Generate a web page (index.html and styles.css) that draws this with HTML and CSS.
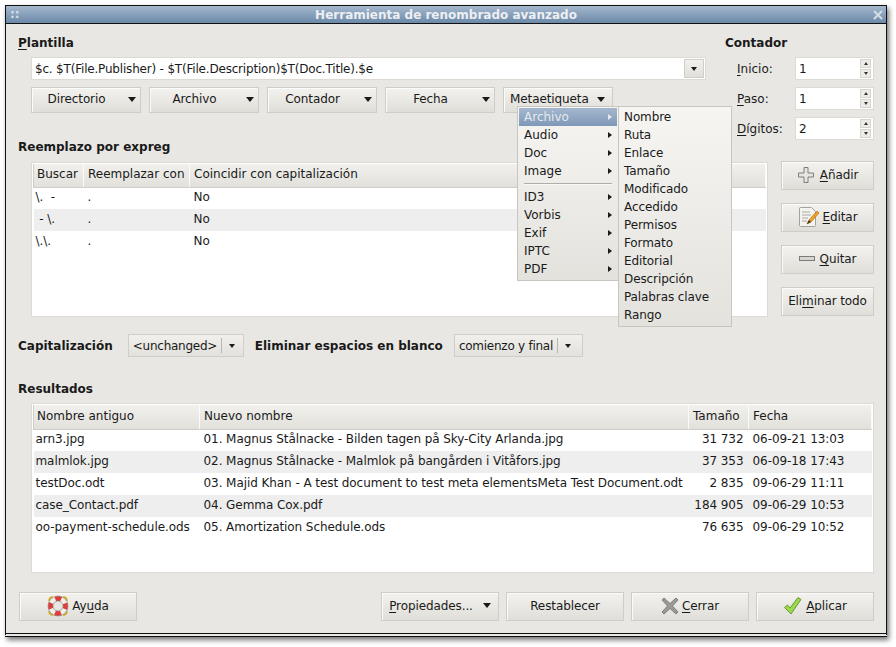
FILE: index.html
```html
<!DOCTYPE html>
<html lang="es">
<head>
    <meta charset="UTF-8">
    <title>Herramienta de renombrado avanzado</title>
    <link rel="stylesheet" href="styles.css">
</head>
<body>
    <div class="window">
        <div class="titlebar">
            <span class="grip">::</span>
            <span class="title">Herramienta de renombrado avanzado</span>
            <svg class="close" width="10" height="10" viewBox="0 0 10 10"><path d="M1 1L9 9M9 1L1 9" stroke="#d5dde6" stroke-width="2"/></svg>
        </div>
        <div class="content">
            <div class="top">
                <div class="template">
                    <div class="heading"><u>P</u>lantilla</div>
                    <div class="indent">
                        <div class="entry-combo">
                            <div class="entry-text">$c. $T(File.Publisher) - $T(File.Description)$T(Doc.Title).$e</div>
                            <div class="entry-btn"><i class="arrow small"></i></div>
                        </div>
                        <div class="token-row">
                            <div class="btn token"><span>Directorio</span><i class="arrow"></i></div>
                            <div class="btn token"><span>Archivo</span><i class="arrow"></i></div>
                            <div class="btn token"><span>Contador</span><i class="arrow"></i></div>
                            <div class="btn token"><span>Fecha</span><i class="arrow"></i></div>
                            <div class="btn token meta"><span>Metaetiqueta</span><i class="arrow"></i></div>
                        </div>
                    </div>
                </div>
                <div class="counter">
                    <div class="heading">Contador</div>
                    <div class="spin-row"><label><u>I</u>nicio:</label><div class="spin"><span>1</span><div class="spin-btns"><i class="up"></i><i class="down"></i></div></div></div>
                    <div class="spin-row"><label><u>P</u>aso:</label><div class="spin"><span>1</span><div class="spin-btns"><i class="up"></i><i class="down"></i></div></div></div>
                    <div class="spin-row"><label><u>D</u>ígitos:</label><div class="spin"><span>2</span><div class="spin-btns"><i class="up"></i><i class="down"></i></div></div></div>
                </div>
            </div>

            <div class="heading">Reemplazo por expreg</div>
            <div class="regex">
                <div class="list regex-list">
                    <table>
                        <colgroup><col class="c-find"><col class="c-repl"><col></colgroup>
                        <thead><tr><th>Buscar</th><th>Reemplazar con</th><th>Coincidir con capitalización</th></tr></thead>
                        <tbody>
                            <tr><td>\.  -</td><td>.</td><td>No</td></tr>
                            <tr><td> - \.</td><td>.</td><td>No</td></tr>
                            <tr><td>\.\.</td><td>.</td><td>No</td></tr>
                        </tbody>
                    </table>
                </div>
                <div class="side-buttons">
                    <div class="btn wide-gap">
                        <svg width="18" height="18" viewBox="0 0 18 18"><path d="M7 1.500h4v5.500h5.500v4H11v5.500H7V11H1.500V7H7z" fill="#e6e5e1" stroke="#7c7c78"/></svg>
                        <span><u>A</u>ñadir</span>
                    </div>
                    <div class="btn">
                        <svg width="22" height="22" viewBox="0 0 22 22">
                            <path d="M2.500 1.500h11l4 4v14a1 1 0 0 1-1 1h-14a1 1 0 0 1-1-1v-17a1 1 0 0 1 1-1z" fill="#f4f3ee" stroke="#a4a29a"/>
                            <path d="M4 6h8M4 9h9M4 12h6M4 15h5" stroke="#a8a8a4"/>
                            <path d="M9 18l2-4 8-9 2 2-8 9z" fill="#f0a020" stroke="#a8660c" stroke-width=".6"/>
                            <path d="M9 18l2-4 2 2z" fill="#3a3026"/>
                        </svg>
                        <span><u>E</u>ditar</span>
                    </div>
                    <div class="btn wide-gap">
                        <svg width="16" height="5" viewBox="0 0 16 5"><rect x=".5" y=".5" width="15" height="4" fill="#d6d5d0" stroke="#7c7c78"/></svg>
                        <span><u>Q</u>uitar</span>
                    </div>
                    <div class="btn"><span>Eli<u>m</u>inar todo</span></div>
                </div>
            </div>

            <div class="options">
                <span class="label">Capitalización</span>
                <div class="combo caps"><span>&lt;unchanged&gt;</span><b></b><i class="arrow small"></i></div>
                <span class="label">Eliminar espacios en blanco</span>
                <div class="combo trim"><span>comienzo y final</span><b></b><i class="arrow small"></i></div>
            </div>

            <div class="heading results-heading">Resultados</div>
            <div class="list results-list">
                <table>
                    <colgroup><col class="c-old"><col class="c-new"><col class="c-size"><col></colgroup>
                    <thead><tr><th>Nombre antiguo</th><th>Nuevo nombre</th><th>Tamaño</th><th>Fecha</th></tr></thead>
                    <tbody>
                        <tr><td>arn3.jpg</td><td>01. Magnus Stålnacke - Bilden tagen på Sky-City Arlanda.jpg</td><td class="num">31 732</td><td>06-09-21 13:03</td></tr>
                        <tr><td>malmlok.jpg</td><td>02. Magnus Stålnacke - Malmlok på bangården i Vitåfors.jpg</td><td class="num">37 353</td><td>06-09-18 17:43</td></tr>
                        <tr><td>testDoc.odt</td><td>03. Majid Khan - A test document to test meta elementsMeta Test Document.odt</td><td class="num">2 835</td><td>09-06-29 11:11</td></tr>
                        <tr><td>case_Contact.pdf</td><td>04. Gemma Cox.pdf</td><td class="num">184 905</td><td>09-06-29 10:53</td></tr>
                        <tr><td>oo-payment-schedule.ods</td><td>05. Amortization Schedule.ods</td><td class="num">76 635</td><td>09-06-29 10:52</td></tr>
                    </tbody>
                </table>
            </div>

            <div class="footer">
                <div class="btn">
                    <svg width="22" height="22" viewBox="0 0 22 22">
                        <path d="M2 6C2 3 3 2 6 2M16 2c3 0 4 1 4 4M20 16c0 3-1 4-4 4M6 20c-3 0-4-1-4-4" fill="none" stroke="#d0a818" stroke-width="1.500"/>
                        <circle cx="11" cy="11" r="7.500" fill="none" stroke="#f1efea" stroke-width="5"/>
                        <circle cx="11" cy="11" r="7.500" fill="none" stroke="#e03c3c" stroke-width="5" stroke-dasharray="6 5.780" stroke-dashoffset="3"/>
                        <circle cx="11" cy="11" r="10" fill="none" stroke="#8c8c88" stroke-width=".7"/>
                        <circle cx="11" cy="11" r="5" fill="#e8e7e3" stroke="#8c8c88" stroke-width=".7"/>
                    </svg>
                    <span>Ay<u>u</u>da</span>
                </div>
                <div class="spacer"></div>
                <div class="btn props"><span><u>P</u>ropiedades...</span><i class="arrow"></i></div>
                <div class="btn"><span>Restablecer</span></div>
                <div class="btn">
                    <svg width="18" height="18" viewBox="0 0 18 18"><path d="M3 1l6 5.500L15 1l2 2-5.500 6 5.500 6-2 2-6-5.500L3 17l-2-2 5.500-6L1 3z" fill="#9a9a96" stroke="#6e6e6a" stroke-width=".8"/></svg>
                    <span><u>C</u>errar</span>
                </div>
                <div class="btn">
                    <svg width="20" height="20" viewBox="0 0 20 20"><path d="M1.500 11.500l3-2.500 2.500 3L15 1.500l3 2L8 18z" fill="#9ad84e" stroke="#6a9a34"/></svg>
                    <span><u>A</u>plicar</span>
                </div>
            </div>
        </div>

        <div class="menu menu-main">
            <div class="item active"><span>Archivo</span><i class="sub"></i></div>
            <div class="item"><span>Audio</span><i class="sub"></i></div>
            <div class="item"><span>Doc</span><i class="sub"></i></div>
            <div class="item"><span>Image</span><i class="sub"></i></div>
            <div class="separator"></div>
            <div class="item"><span>ID3</span><i class="sub"></i></div>
            <div class="item"><span>Vorbis</span><i class="sub"></i></div>
            <div class="item"><span>Exif</span><i class="sub"></i></div>
            <div class="item"><span>IPTC</span><i class="sub"></i></div>
            <div class="item"><span>PDF</span><i class="sub"></i></div>
        </div>
        <div class="menu menu-sub">
            <div class="item">Nombre</div>
            <div class="item">Ruta</div>
            <div class="item">Enlace</div>
            <div class="item">Tamaño</div>
            <div class="item">Modificado</div>
            <div class="item">Accedido</div>
            <div class="item">Permisos</div>
            <div class="item">Formato</div>
            <div class="item">Editorial</div>
            <div class="item">Descripción</div>
            <div class="item">Palabras clave</div>
            <div class="item">Rango</div>
        </div>
    </div>
</body>
</html>
```

FILE: styles.css
```css
* {
    box-sizing: border-box;
}
html, body {
    margin: 0;
    padding: 0;
    background: #FFFFFF;
}
body {
    width: 896px;
    height: 647px;
    overflow: hidden;
    font-family: "DejaVu Sans", sans-serif;
    font-size: 12px;
    color: #1A1A1A;
}
.window {
    position: relative;
    width: 882px;
    height: 632px;
    margin: 5px 0 0 5px;
    background: #E8E7E3;
    border: 1px solid #111111;
    border-bottom: 4px double #111111;
    box-shadow: 2px 3px 5px rgba(0, 0, 0, 0.55);
}
.titlebar {
    display: flex;
    align-items: center;
    justify-content: center;
    position: relative;
    height: 18px;
    background: linear-gradient(#A5B8CE, #6B89A9);
    border-bottom: 1px solid #111111;
    color: #EDEFF2;
    font-weight: bold;
}
.grip {
    position: absolute;
    left: 4px;
    top: 1px;
    color: #D5DDE6;
}
.close {
    position: absolute;
    right: 3px;
    top: 4px;
}
.content {
    padding: 10px 12px 0;
}
.heading {
    height: 16px;
    padding-top: 1px;
    line-height: 16px;
    font-weight: bold;
}
.top {
    display: flex;
    height: 104px;
}
.template {
    width: 707px;
}
.indent {
    padding: 7px 0 0 13px;
}
.entry-combo {
    display: flex;
    align-items: center;
    width: 675px;
    height: 23px;
    background: #FFFFFF;
    border: 1px solid #DCDAD3;
}
.entry-text {
    flex: 1;
    padding-left: 3px;
    letter-spacing: -0.19px;
}
.entry-btn {
    display: flex;
    align-items: center;
    justify-content: center;
    width: 20px;
    height: 19px;
    margin-right: 1px;
    background: linear-gradient(#F2F1ED, #E0DFDA);
    border: 1px solid #D0CEC6;
}
.token-row {
    display: flex;
    gap: 8px;
    margin-top: 7px;
}
.btn {
    display: flex;
    align-items: center;
    justify-content: center;
    gap: 3px;
    padding-bottom: 2px;
    background: linear-gradient(#F3F2EE, #DFDED9);
    border: 1px solid #CFCDC5;
    box-shadow: inset 1px 1px 0 #FBFBF9;
    white-space: nowrap;
    letter-spacing: -0.1px;
}
.btn.wide-gap {
    gap: 5px;
}
.btn u, .heading u, label u {
    text-underline-offset: 2px;
}
.token {
    justify-content: space-between;
    width: 110px;
    height: 26px;
    padding: 0 4px 2px 0;
}
.token span {
    flex: 1;
    padding-right: 4px;
    text-align: center;
}
.token.meta {
    padding-left: 6px;
    padding-right: 7px;
}
.token.meta span {
    padding-right: 0;
    text-align: left;
}
.arrow {
    display: inline-block;
    width: 0;
    height: 0;
    border-left: 4.500px solid transparent;
    border-right: 4.500px solid transparent;
    border-top: 5px solid #1A1A1A;
}
.arrow.small {
    border-left-width: 3.500px;
    border-right-width: 3.500px;
    border-top-width: 4px;
}
.counter {
    width: 149px;
}
.counter .heading {
    margin-bottom: 7px;
}
.spin-row {
    display: flex;
    align-items: center;
    height: 23px;
    margin-bottom: 7px;
    padding-left: 12px;
}
.spin-row label {
    width: 58px;
}
.spin {
    display: flex;
    align-items: center;
    justify-content: space-between;
    width: 79px;
    height: 23px;
    padding-left: 3px;
    background: #FFFFFF;
    border: 1px solid #DCDAD3;
}
.spin-btns {
    display: flex;
    flex-direction: column;
    gap: 1px;
    width: 11px;
    height: 19px;
    margin-right: 2px;
}
.spin-btns i {
    display: flex;
    flex: 1;
    align-items: center;
    justify-content: center;
    background: #ECEBE7;
    border: 1px solid #D6D4CD;
}
.spin-btns i::after {
    content: "";
    border-left: 2.500px solid transparent;
    border-right: 2.500px solid transparent;
}
.spin-btns .up::after {
    border-bottom: 3px solid #333333;
}
.spin-btns .down::after {
    border-top: 3px solid #333333;
}
.regex {
    display: flex;
    justify-content: space-between;
    margin: 8px 0 0 13px;
    width: 843px;
}
.list {
    background: #FFFFFF;
    border: 1px solid #DCDAD3;
    padding: 1px 1px 0;
}
.list table {
    width: 100%;
    border-collapse: collapse;
    table-layout: fixed;
}
.list th {
    height: 23px;
    padding: 0 0 2px 4px;
    font-weight: normal;
    text-align: left;
    white-space: nowrap;
    overflow: hidden;
    background: linear-gradient(#F1F0EC, #E1E0DB);
    border-right: 1px solid #FBFBF9;
    border-left: 1px solid #CFCDC5;
    border-bottom: 1px solid #CFCDC5;
}
.list th:first-child {
    padding-left: 3px;
}
.list td {
    height: 22px;
    padding: 0 0 2px 4px;
    white-space: pre;
    overflow: hidden;
    letter-spacing: -0.07px;
}
.list td:first-child {
    padding-left: 2px;
}
.list tbody tr:nth-child(even) {
    background: #EEEEEE;
}
.list td.num {
    padding: 0 5px 2px 0;
    text-align: right;
}
.regex-list {
    width: 737px;
    height: 155px;
}
.c-find {
    width: 50px;
}
.c-repl {
    width: 106px;
}
.side-buttons {
    display: flex;
    flex-direction: column;
    gap: 13px;
    width: 93px;
    margin-top: -1px;
}
.side-buttons .btn {
    height: 29px;
}
.options {
    display: flex;
    align-items: center;
    height: 23px;
    margin-top: 17px;
}
.label {
    font-weight: bold;
}
.combo {
    display: flex;
    align-items: center;
    height: 23px;
    padding-left: 4px;
    background: linear-gradient(#F1F0EC, #E2E1DC);
    border: 1px solid #D0CEC6;
    letter-spacing: -0.25px;
}
.combo b {
    width: 1px;
    height: 15px;
    margin: 0 7px 0 4px;
    background: #B8B6AE;
}
.caps {
    width: 116px;
    margin: 0 11px 0 15px;
}
.trim {
    width: 129px;
    margin-left: 11px;
}
.results-heading {
    margin-top: 23px;
}
.results-list {
    width: 843px;
    height: 170px;
    margin: 7px 0 0 13px;
}
.results-list th {
    height: 24px;
}
.c-old {
    width: 166px;
}
.c-new {
    width: 489px;
}
.c-size {
    width: 60px;
}
.footer {
    display: flex;
    gap: 7px;
    width: 855px;
    margin: 19px 0 0 1px;
}
.footer .btn {
    width: 118px;
    height: 29px;
}
.footer .btn.props {
    gap: 10px;
}
.spacer {
    flex: 1;
}
.menu {
    position: absolute;
    top: 100px;
    padding: 1px 1px 2px 1px;
    background: linear-gradient(#F6F5F2, #E3E2DD);
    border: 1px solid #C8C6BE;
}
.menu-main {
    left: 511px;
    width: 102px;
    height: 175px;
}
.menu-sub {
    left: 612px;
    width: 114px;
    height: 221px;
    letter-spacing: -0.1px;
}
.item {
    display: flex;
    align-items: center;
    justify-content: space-between;
    height: 18px;
    padding: 0 5px;
}
.menu-sub .item {
    padding-left: 4px;
}
.item.active {
    background: linear-gradient(#A4B7CE, #7F98B8);
    color: #E6E9ED;
}
.sub {
    border-top: 3.500px solid transparent;
    border-bottom: 3.500px solid transparent;
    border-left: 4px solid #1A1A1A;
}
.item.active .sub {
    border-left-color: #E6E9ED;
}
.separator {
    height: 2px;
    margin: 3px 5px 3px 5px;
    background: #B0AEA6;
    border-bottom: 1px solid #F8F8F6;
}
```
